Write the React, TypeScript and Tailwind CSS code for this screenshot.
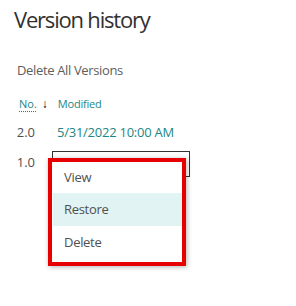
export default function App() {
  return (
    <div className="relative h-[306px] w-[296px] overflow-hidden bg-white font-['Open_Sans',sans-serif]">
      <h1 className="flex h-[34px] items-end pl-[14px] text-[22px] font-medium leading-[30px] tracking-[-1.2px] text-[#323130]">
        Version history
      </h1>

      <div className="mt-[27px] h-[18px] pl-[17px] text-[13px] leading-[18px] tracking-[-0.35px] text-[#605e5c]">
        Delete All Versions
      </div>

      <div className="mt-[16px] flex h-[18px] items-center pl-[19px] text-[11px] leading-[18px]">
        <span className="text-[#1b8786] underline decoration-dotted underline-offset-[3px]">No.</span>
        <span className="ml-[5px] text-[12px] font-bold text-black">↓</span>
        <span className="ml-[10px] tracking-[-0.2px] text-[#1b8786]">Modified</span>
      </div>

      <div className="mt-[4px] flex h-[30px] items-center text-[13px] leading-[20px]">
        <span className="w-[35px] text-right text-[#505050]">2.0</span>
        <span className="ml-[22px] tracking-[-0.25px] text-[#1b8786]">5/31/2022 10:00 AM</span>
      </div>

      <div className="flex h-[30px] items-center text-[13px] leading-[20px]">
        <span className="w-[35px] text-right text-[#505050]">1.0</span>
        <div className="ml-[17px] mt-[3px] h-[26px] w-[138px] border border-[#323130]" />
      </div>

      <div className="absolute left-[48px] top-[158px] h-[108px] w-[138px] border-4 border-[#e60000] bg-white shadow-[1px_1px_5px_rgba(0,0,0,0.3)]">
        <ul className="flex flex-col pl-[1px] text-[13px] tracking-[-0.3px] text-[#505050]">
          <li className="flex h-[31px] items-center pl-[11px]">View</li>
          <li className="flex h-[33px] items-center bg-[#e1f4f3] pl-[11px]">Restore</li>
          <li className="flex h-[33px] items-center pl-[11px]">Delete</li>
        </ul>
      </div>
    </div>
  )
}
